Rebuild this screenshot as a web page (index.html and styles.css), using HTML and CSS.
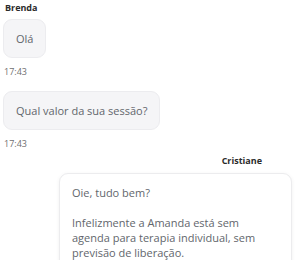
FILE: index.html
```html
<!DOCTYPE html>
<html lang="pt">
<head>
<meta charset="utf-8">
<link rel="stylesheet" href="styles.css">
</head>
<body>
<div class="chat">
  <div class="group incoming">
    <div class="name">Brenda</div>
    <div class="bubble gray">Olá</div>
    <div class="time">17:43</div>
    <div class="bubble gray">Qual valor da sua sessão?</div>
    <div class="time last">17:43</div>
  </div>
  <div class="group outgoing">
    <div class="name">Cristiane</div>
    <div class="bubble white">
      <p>Oie, tudo bem?</p>
      <p>Infelizmente a Amanda está sem agenda para terapia individual, sem previsão de liberação.</p>
    </div>
  </div>
</div>
</body>
</html>
```
FILE: styles.css
```css
html, body {
  margin: 0;
  padding: 0;
  background: #ffffff;
}
body {
  font-family: "Open Sans", "Noto Sans", sans-serif;
  width: 300px;
  height: 260px;
  overflow: hidden;
}
.chat {
  padding: 2px 8px 0 3px;
  display: flex;
  flex-direction: column;
}
.group {
  display: flex;
  flex-direction: column;
}
.incoming {
  align-items: flex-start;
}
.outgoing {
  align-items: flex-end;
  margin-top: 5px;
}
.name {
  font-size: 9px;
  font-weight: 700;
  line-height: 12px;
  color: #2b2b2b;
  padding-left: 2px;
}
.outgoing .name {
  padding-left: 0;
  margin-right: 30px;
}
.bubble {
  font-size: 11px;
  line-height: 15px;
  color: #62666c;
  border-radius: 9px;
  box-sizing: border-box;
}
.gray {
  background: #f5f5f7;
  border: 1px solid #ececef;
  padding: 11px 12px;
  margin-top: 5px;
}
.white {
  background: #ffffff;
  border: 1px solid #ececee;
  box-shadow: 0 1px 4px rgba(0, 0, 0, 0.06);
  padding: 11px 30px 11px 12px;
  margin-top: 6px;
  width: 233px;
}
.white p {
  margin: 0;
}
.white p + p {
  margin-top: 15px;
}
.time {
  font-size: 9px;
  line-height: 12px;
  color: #6f6f6f;
  margin-top: 8px;
  margin-bottom: 8px;
  padding-left: 1px;
}
.time.last {
  margin-bottom: 0;
}
```
